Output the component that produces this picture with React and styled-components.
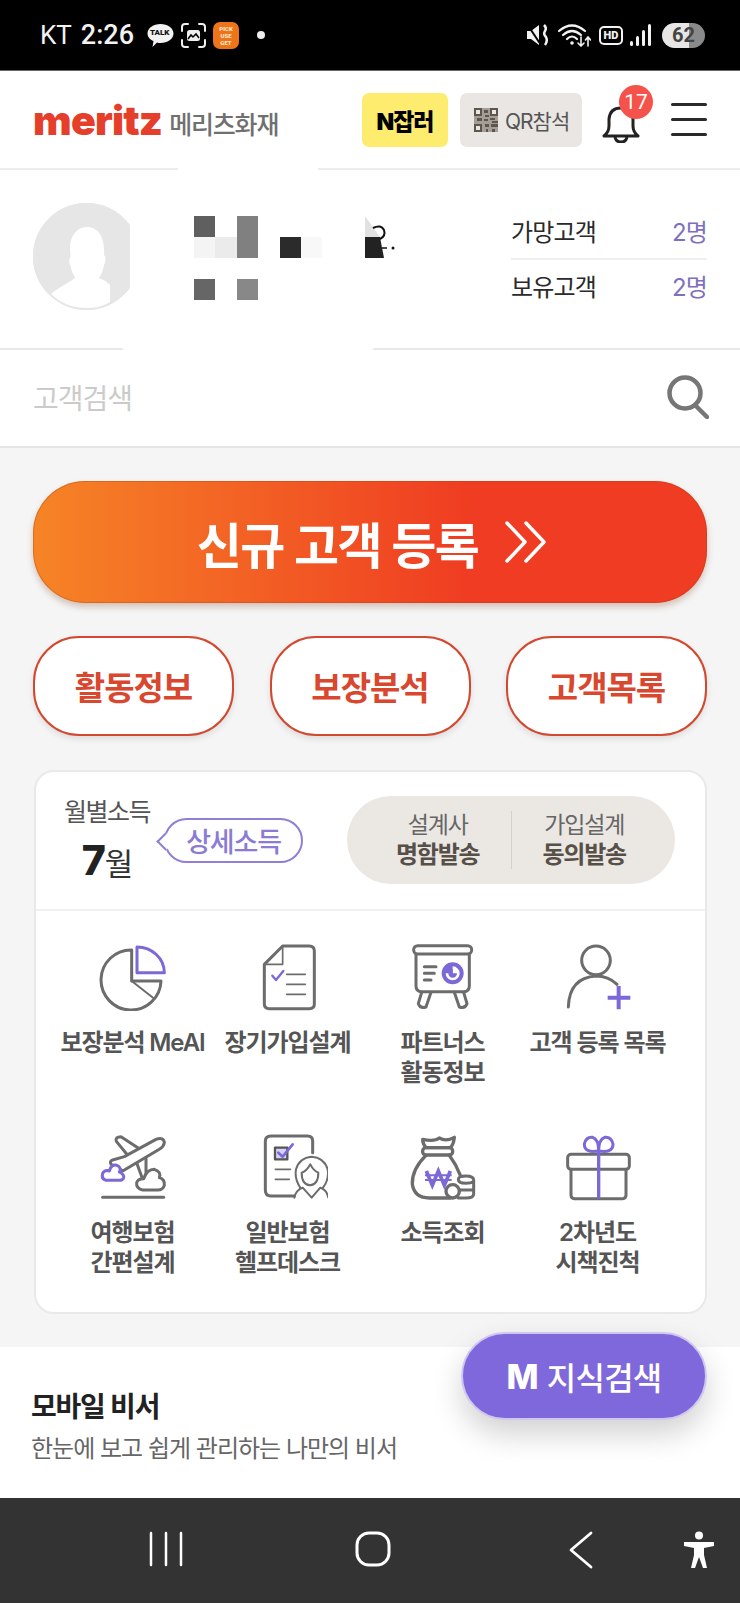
import React from "react";
import styled, { createGlobalStyle } from "styled-components";

const GRAY = "#6c6c6c";
const PURPLE = "#7d68d8";

const stats = [
  { label: "가망고객", count: "2명" },
  { label: "보유고객", count: "2명" },
];

const mosaic = [
  "#5f5f5f", null, "#808080", null, null, null, null, null, null,
  "#f4f4f4", "#ebebeb", "#808080", null, "#2b2b2b", "#f8f8f8", null, null, null,
  null, null, null, null, null, null, null, null, null,
  "#666666", null, "#888888", null, null, null, null, null, null,
];

const Icon = ({ box, children }) => (
  <svg width="80" height="70" viewBox={`${box} 240 210`} fill="none" stroke={GRAY} strokeWidth="9" strokeLinecap="round" strokeLinejoin="round">
    {children}
  </svg>
);

const menu = [
  {
    label: ["보장분석 MeAI"],
    icon: (
      <Icon box="156 60">
        <path d="M272 87A90 90 0 1 0 360 180H272Z" />
        <path d="M272 180L336 230" strokeWidth="6" />
        <path d="M288 78V155H370A82 77 0 0 0 288 78Z" stroke={PURPLE} />
      </Icon>
    ),
  },
  {
    label: ["장기가입설계"],
    icon: (
      <Icon box="621 60">
        <path d="M725 75H805Q820 75 820 90V250Q820 263 805 263H685Q670 263 670 250V130Z" />
        <path d="M670 130H725V75" strokeWidth="5" />
        <path d="M737 160H793M737 190H793M737 220H793" strokeWidth="5" />
        <path d="M694 164L705 177L727 150" stroke={PURPLE} strokeWidth="7" />
      </Icon>
    ),
  },
  {
    label: ["파트너스", "활동정보"],
    icon: (
      <Icon box="96 60">
        <rect x="128" y="74" width="174" height="25" rx="12" />
        <path d="M135 100V195Q135 212 152 212H278Q295 212 295 195V100" />
        <path d="M152 214L142 248Q148 264 165 258L180 214M250 214L265 258Q282 264 288 248L278 214" />
        <path d="M160 137H195M160 157H190M160 177H180" />
        <circle cx="245" cy="157" r="33" fill={PURPLE} stroke="none" />
        <path d="M224 157A21 21 0 1 0 245 136V157Z" fill="#fff" stroke="none" />
        <path d="M232 157A13 13 0 0 0 258 157H245V144A13 13 0 0 0 232 157Z" fill={PURPLE} stroke="none" />
      </Icon>
    ),
  },
  {
    label: ["고객 등록 목록"],
    icon: (
      <Icon box="561 60">
        <circle cx="675" cy="118" r="43" />
        <path d="M592 258Q595 170 675 165Q712 165 738 190" />
        <path d="M710 230H778M743 195V265" stroke={PURPLE} strokeWidth="12" strokeLinecap="butt" />
      </Icon>
    ),
  },
  {
    label: ["여행보험", "간편설계"],
    icon: (
      <Icon box="156 45">
        <path d="M262 120L226 76Q222 62 240 62L295 98" />
        <path d="M285 135L305 190M315 128V188" />
        <path d="M215 132L250 122L345 70Q368 62 370 80Q368 92 355 100L245 165Q225 150 210 145Q205 135 215 132Z" fill="#fff" />
        <path d="M305 222Q285 218 287 200Q290 188 308 188Q318 160 340 160Q362 168 355 185Q372 190 370 208Q366 222 350 222Z" fill="#fff" />
        <path d="M195 193Q180 188 185 172Q192 160 205 165Q212 140 232 150Q242 160 235 168Q250 175 248 185Q245 193 235 193Z" stroke={PURPLE} fill="#fff" />
        <path d="M185 244H368" />
      </Icon>
    ),
  },
  {
    label: ["일반보험", "헬프데스크"],
    icon: (
      <Icon box="621 45">
        <path d="M815 110V75Q815 60 800 60H690Q673 60 673 75V222Q673 240 690 240H760" />
        <rect x="702" y="95" width="37" height="35" stroke="#555" strokeWidth="7" fill="#d9d3f3" />
        <path d="M712 110L725 122L755 85" stroke={PURPLE} strokeWidth="8" />
        <path d="M703 160H748M703 190H745" strokeWidth="5" />
        <path d="M778 215Q760 190 765 160Q775 125 812 122Q850 125 860 160Q865 190 846 215" strokeWidth="6" />
        <path d="M782 170Q795 168 808 145Q818 165 832 170Q832 205 807 208Q782 205 782 170Z" strokeWidth="6" />
        <path d="M760 245Q765 222 785 215L812 245L838 215Q858 222 862 245" strokeWidth="6" />
      </Icon>
    ),
  },
  {
    label: ["소득조회"],
    icon: (
      <Icon box="96 45">
        <path d="M155 70Q190 78 205 66Q225 78 250 64Q248 85 238 95H165Q155 85 155 70Z" strokeWidth="10" />
        <rect x="155" y="95" width="90" height="22" rx="10" strokeWidth="10" />
        <path d="M165 118Q122 160 124 205Q130 246 175 246H238M235 118Q255 145 268 178" strokeWidth="10" />
        <path d="M166 165L184 208L202 165L220 208L238 165" stroke={PURPLE} strokeWidth="11" strokeLinecap="butt" strokeLinejoin="miter" />
        <path d="M162 178H242M162 192H242" stroke={PURPLE} strokeWidth="6" strokeLinecap="butt" />
        <circle cx="245" cy="226" r="20" strokeWidth="10" fill="#fff" />
        <path d="M262 190Q262 180 285 180Q308 180 308 192V234Q308 246 285 246H262M262 190Q262 202 285 202Q300 202 308 196M268 222H306" strokeWidth="9" />
      </Icon>
    ),
  },
  {
    label: ["2차년도", "시책진척"],
    icon: (
      <Icon box="561 45">
        <rect x="590" y="115" width="185" height="45" rx="10" />
        <path d="M600 160V238Q600 248 610 248H755Q765 248 765 238V160" />
        <path d="M683 105V248" stroke={PURPLE} strokeWidth="10" strokeLinecap="butt" />
        <path d="M683 105Q640 112 640 84Q645 62 665 64Q683 70 683 105Q726 112 726 84Q721 62 701 64Q683 70 683 105Z" stroke={PURPLE} />
      </Icon>
    ),
  },
];

const App = () => {
  return (
    <Page>
      <GlobalStyle />

      <StatusBar>
        <Carrier>KT</Carrier>
        <Clock>2:26</Clock>
        <TalkBubble>
          <svg width="27" height="25" viewBox="0 0 27 25">
            <path d="M13.5 1C20.5 1 26.500 5 26.500 10.500S20.500 20 13.500 20C12.500 20 11 20 10 19.500L5.500 24L6.500 18C3 16.500.5 14 .5 10.500C.5 5 6.500 1 13.500 1Z" fill="#f2f2f2" />
          </svg>
          <TalkText>TALK</TalkText>
        </TalkBubble>
        <svg width="25" height="25" viewBox="0 0 25 25" fill="none" stroke="#efefef" strokeWidth="2">
          <path d="M1 8V4Q1 1 4 1H7M18 1H21Q24 1 24 4V8M24 17V21Q24 24 21 24H18M7 24H4Q1 24 1 21V17" strokeLinecap="round" />
          <rect x="6" y="7" width="13" height="11" rx="2.500" fill="#efefef" stroke="none" />
          <path d="M7 16L10 12L12 14L15 11L18 15" stroke="#000" strokeWidth="1.500" />
        </svg>
        <OrangeBadge>
          <span>PICK</span>
          <span>USE</span>
          <span>GET</span>
        </OrangeBadge>
        <StatusDot />
        <StatusRight>
          <svg width="25" height="24" viewBox="0 0 25 24" fill="#f2f2f2">
            <path d="M1 8H5L13 2V22L5 16H1Z" />
            <path d="M1 1L15 22" stroke="#000" strokeWidth="2" />
            <path d="M18 2Q21 5 19 8Q17 11 20 14Q22 18 19 22" fill="none" stroke="#f2f2f2" strokeWidth="2.500" />
          </svg>
          <svg width="33" height="24" viewBox="0 0 33 24" fill="none" stroke="#f2f2f2" strokeWidth="2.200" strokeLinecap="round">
            <path d="M1 8Q14 -3 27 8M5 12Q14 4 23 12M9 16Q14 11 19 16" />
            <circle cx="14" cy="20" r="1.800" fill="#f2f2f2" stroke="none" />
            <path d="M23 14V23M20 20L23 23L26 20M30 23V14M27.500 17L30 14L32.500 17" strokeWidth="1.600" />
          </svg>
          <HdBadge>HD</HdBadge>
          <svg width="22" height="24" viewBox="0 0 22 24" fill="#f2f2f2">
            <rect x="0" y="18" width="3" height="5" rx="1.500" />
            <rect x="6" y="13" width="3" height="10" rx="1.500" />
            <rect x="12" y="7" width="3" height="16" rx="1.500" />
            <rect x="18" y="1" width="3" height="22" rx="1.500" />
          </svg>
          <Battery>62</Battery>
        </StatusRight>
      </StatusBar>

      <Header>
        <LogoMark>meritz</LogoMark>
        <LogoName>메리츠화재</LogoName>
        <HeaderActions>
          <NButton>N잡러</NButton>
          <QrButton>
            <svg width="24" height="24" viewBox="0 0 24 24" fill="#5e554d">
              <path d="M0 0H24V24H0Z" opacity=".5" />
              <path d="M0 0H8V8H0ZM16 0H24V8H16ZM0 16H8V24H0ZM10 2H14V5H10ZM11 7H15V9H11ZM10 11H14V13H10ZM3 10H8V13H3ZM16 10H21V12H16ZM18 13H24V15H18ZM11 16H15V19H11ZM17 16H24V19H17ZM12 21H14V24H12ZM18 21H21V24H18Z" />
              <path d="M2 2H6V6H2ZM18 2H22V6H18ZM2 18H6V22H2Z" fill="#e9e6e3" />
            </svg>
            QR참석
          </QrButton>
          <BellWrap>
            <svg width="38" height="38" viewBox="0 0 38 38" fill="none" stroke="#222" strokeWidth="3" strokeLinejoin="round">
              <path d="M2 31Q7 27 7 21V14Q8 3 19 3Q30 3 31 14V21Q31 27 36 31Z" />
              <path d="M13 32Q14 37 19 37Q24 37 25 32" />
            </svg>
            <BellBadge>17</BellBadge>
          </BellWrap>
          <Hamburger>
            <span />
            <span />
            <span />
          </Hamburger>
        </HeaderActions>
      </Header>

      <Profile>
        <HeaderPatch />
        <LinePatch />
        <AvatarClip>
          <svg width="107" height="107" viewBox="0 0 107 107">
            <circle cx="53.500" cy="53.500" r="53.500" fill="#e6e6e6" />
            <path d="M54 24C44 24 37 33 37 45C37 50 38 52 37 55C35 58 37 62 38 64C38 69 42 73 42 75C34 81 24 85 17 92C28 104 42 106 54 106C60 106 70 104 77 99V82C73 78 71 77 66 75C68 72 70 68 71 62C73 58 73 54 71 52C72 35 66 24 54 24Z" fill="#fff" />
            <circle cx="53.500" cy="53.500" r="52.500" fill="none" stroke="#e6e6e6" strokeWidth="2" />
          </svg>
        </AvatarClip>
        <Mosaic>
          {mosaic.map((color, i) => (
            <Pixel key={i} $color={color} />
          ))}
          <MosaicTail width="42" height="42" viewBox="0 0 42 42">
            <path d="M0 0V21H15Z" fill="#e2e2e2" />
            <path d="M0 21H15L19 42H0Z" fill="#222" />
            <path d="M8 12Q16 8 19 14Q21 20 15 23" fill="none" stroke="#111" strokeWidth="2" />
            <path d="M17 32H22" stroke="#111" strokeWidth="1.500" />
            <circle cx="28" cy="32" r="1.500" fill="#111" />
          </MosaicTail>
        </Mosaic>
        <StatList>
          {stats.map((stat) => (
            <StatRow key={stat.label}>
              <span>{stat.label}</span>
              <StatCount>{stat.count}</StatCount>
            </StatRow>
          ))}
        </StatList>
      </Profile>

      <SearchBar>
        <SearchHint>고객검색</SearchHint>
        <svg width="42" height="44" viewBox="0 0 42 44" fill="none" stroke="#767676" strokeWidth="4.500" strokeLinecap="round">
          <circle cx="18" cy="18" r="15.500" />
          <path d="M29 31L40 42" />
        </svg>
      </SearchBar>

      <Main>
        <PrimaryButton>
          신규 고객 등록
          <svg width="42" height="42" viewBox="0 0 42 42" fill="none" stroke="#fff" strokeWidth="3.500" strokeLinecap="round" strokeLinejoin="round">
            <path d="M2 2L20 21L2 40M21 2L39 21L21 40" />
          </svg>
        </PrimaryButton>

        <QuickRow>
          <QuickButton>활동정보</QuickButton>
          <QuickButton>보장분석</QuickButton>
          <QuickButton>고객목록</QuickButton>
        </QuickRow>

        <Card>
          <CardHead>
            <MonthBlock>
              <MonthTitle>월별소득</MonthTitle>
              <MonthValue><b>7</b>월</MonthValue>
            </MonthBlock>
            <DetailBubble>상세소득</DetailBubble>
            <SendPill>
              <SendItem>
                <span>설계사</span>
                <b>명함발송</b>
              </SendItem>
              <SendItem>
                <span>가입설계</span>
                <b>동의발송</b>
              </SendItem>
            </SendPill>
          </CardHead>

          <MenuGrid>
            {menu.map((item) => (
              <MenuItem key={item.label[0]}>
                {item.icon}
                <MenuLabel>
                  {item.label.map((line) => (
                    <div key={line}>{line}</div>
                  ))}
                </MenuLabel>
              </MenuItem>
            ))}
          </MenuGrid>
        </Card>
      </Main>

      <Secretary>
        <SecretaryTitle>모바일 비서</SecretaryTitle>
        <SecretaryText>한눈에 보고 쉽게 관리하는 나만의 비서</SecretaryText>
      </Secretary>

      <NavBar>
        <svg width="34" height="36" viewBox="0 0 34 36" stroke="#fff" strokeWidth="2.500" strokeLinecap="round">
          <path d="M2 2V34M17 2V34M32 2V34" />
        </svg>
        <svg width="36" height="36" viewBox="0 0 36 36" fill="none" stroke="#fff" strokeWidth="3">
          <rect x="2" y="2" width="32" height="32" rx="12" />
        </svg>
        <svg width="24" height="38" viewBox="0 0 24 38" fill="none" stroke="#fff" strokeWidth="2.800" strokeLinecap="round" strokeLinejoin="round">
          <path d="M22 2L2 19L22 36" />
        </svg>
        <svg width="32" height="38" viewBox="0 0 32 38" fill="#fff">
          <circle cx="16" cy="4.500" r="4" />
          <path d="M1 11H31V15L21 17V24L24 37H20L16 26L12 37H8L11 24V17L1 15Z" />
        </svg>
      </NavBar>

      <KnowledgeFab><b>M</b> 지식검색</KnowledgeFab>
    </Page>
  );
};

export default App;

const GlobalStyle = createGlobalStyle`
  html, body {
    margin: 0;
    padding: 0;
    background: #fff;
  }

  * {
    box-sizing: border-box;
  }

  body {
    font-family: "Inter", "Noto Sans CJK KR", sans-serif;
  }
`;

const Page = styled.div`
  position: relative;
  display: flex;
  flex-direction: column;
  width: 740px;
  height: 1603px;
  overflow: hidden;
`;

const StatusBar = styled.div`
  display: flex;
  align-items: center;
  flex: 0 0 71px;
  padding: 4px 35px 4px 40px;
  background: #000;
  border-bottom: 1px solid #666;
  color: #f2f2f2;
  font-family: "Roboto", sans-serif;
`;

const Carrier = styled.span`
  font-size: 26px;
  margin-right: 9px;
`;

const Clock = styled.span`
  font-size: 27px;
  font-weight: 500;
  margin-right: 13px;
`;

const TalkBubble = styled.div`
  position: relative;
  width: 27px;
  height: 25px;
  margin-right: 7px;
`;

const TalkText = styled.span`
  position: absolute;
  left: 3px;
  top: 5px;
  color: #111;
  font-size: 8px;
  font-weight: 900;
  line-height: 10px;
`;

const OrangeBadge = styled.div`
  display: flex;
  flex-direction: column;
  justify-content: center;
  align-items: center;
  width: 26px;
  height: 27px;
  margin-left: 7px;
  border-radius: 7px;
  background: #ee7419;
  color: #ffe3c8;
  font-size: 6px;
  font-weight: 900;
  line-height: 7px;
`;

const StatusDot = styled.i`
  width: 8px;
  height: 8px;
  margin-left: 18px;
  border-radius: 50%;
  background: #eee;
`;

const StatusRight = styled.div`
  display: flex;
  align-items: center;
  gap: 7px;
  margin-left: auto;
`;

const HdBadge = styled.span`
  display: flex;
  align-items: center;
  justify-content: center;
  width: 24px;
  height: 19px;
  border: 2px solid #f2f2f2;
  border-radius: 5px;
  font-size: 11px;
  font-weight: 900;
  margin-left: 1px;
`;

const Battery = styled.span`
  display: flex;
  align-items: center;
  justify-content: center;
  width: 43px;
  height: 25px;
  margin-left: 3px;
  border-radius: 13px;
  background: linear-gradient(90deg, #e6e6e6 0 62%, #8a8a8a 62%);
  color: #444;
  font-size: 20px;
  font-weight: 700;
`;

const Header = styled.header`
  display: flex;
  align-items: center;
  flex: 0 0 99px;
  padding: 0 33px;
  background: #fff;
  border-bottom: 2px solid #ececec;
`;

const LogoMark = styled.span`
  color: #e53e2b;
  font-size: 41px;
  font-weight: 900;
  letter-spacing: -0.8px;
  line-height: 40px;
`;

const LogoName = styled.span`
  margin: 7px 0 0 7px;
  color: #707070;
  font-size: 25px;
  font-weight: 500;
  letter-spacing: -1.2px;
`;

const HeaderActions = styled.div`
  display: flex;
  align-items: center;
  margin-left: auto;
`;

const NButton = styled.div`
  display: flex;
  align-items: center;
  justify-content: center;
  width: 86px;
  height: 54px;
  margin-right: 12px;
  border-radius: 7px;
  background: #fdec6e;
  color: #000;
  font-size: 23px;
  font-weight: 900;
  letter-spacing: -1px;
`;

const QrButton = styled.div`
  display: flex;
  align-items: center;
  gap: 7px;
  width: 122px;
  height: 54px;
  padding-left: 14px;
  border-radius: 7px;
  background: #e9e6e3;
  color: #555;
  font-size: 21px;
  letter-spacing: -1px;
`;

const BellWrap = styled.div`
  position: relative;
  display: flex;
  width: 38px;
  height: 38px;
  margin: 8px 0 0 20px;
`;

const BellBadge = styled.span`
  position: absolute;
  top: -20px;
  right: -13px;
  display: flex;
  align-items: center;
  justify-content: center;
  width: 34px;
  height: 34px;
  border-radius: 50%;
  background: #f4524a;
  color: #fff;
  font-family: "Roboto", sans-serif;
  font-size: 21px;
`;

const Hamburger = styled.div`
  display: flex;
  flex-direction: column;
  gap: 12px;
  width: 36px;
  margin-left: 31px;

  span {
    height: 3px;
    border-radius: 2px;
    background: #2a2a2a;
  }
`;

const Profile = styled.section`
  position: relative;
  display: flex;
  flex: 0 0 180px;
  padding: 33px 33px 0;
  border-bottom: 2px solid #e8e8e8;
`;

const HeaderPatch = styled.div`
  position: absolute;
  top: -4px;
  left: 178px;
  width: 140px;
  height: 6px;
  background: #fff;
`;

const LinePatch = styled.div`
  position: absolute;
  bottom: -2px;
  left: 123px;
  width: 250px;
  height: 2px;
  background: #fff;
`;

const AvatarClip = styled.div`
  width: 97px;
  height: 107px;
  overflow: hidden;

  svg {
    display: block;
  }
`;

const Mosaic = styled.div`
  position: relative;
  display: grid;
  grid-template-columns: repeat(9, 21.4px);
  grid-auto-rows: 21px;
  align-self: flex-start;
  margin: 13px 0 0 64px;
`;

const Pixel = styled.div`
  background: ${(props) => props.$color || "transparent"};
`;

const MosaicTail = styled.svg`
  position: absolute;
  left: 171px;
  top: 0;
`;

const StatList = styled.div`
  width: 196px;
  margin: -1px 0 0 auto;
`;

const StatRow = styled.div`
  display: flex;
  align-items: center;
  justify-content: space-between;
  height: 56px;
  color: #2a2a2a;
  font-size: 24px;
  letter-spacing: -0.8px;

  & + & {
    border-top: 2px solid #efefef;
    padding-bottom: 3px;
  }
`;

const StatCount = styled.span`
  color: #7e6fc0;
`;

const SearchBar = styled.div`
  display: flex;
  align-items: center;
  justify-content: space-between;
  flex: 0 0 98px;
  padding: 0 31px 2px 33px;
  background: #fff;
  border-bottom: 2px solid #e5e5e5;
`;

const SearchHint = styled.span`
  color: #cbcbcb;
  font-size: 28px;
  letter-spacing: -1px;
`;

const Main = styled.main`
  display: flex;
  flex-direction: column;
  flex: 0 0 899px;
  padding: 33px 33px 0;
  background: #f5f5f5;
`;

const PrimaryButton = styled.div`
  display: flex;
  align-items: center;
  justify-content: center;
  gap: 27px;
  height: 122px;
  padding-left: 4px;
  border-radius: 52px;
  background: linear-gradient(90deg, #f68426 0%, #ef3c22 65%);
  box-shadow: 0 4px 6px rgba(120, 60, 30, 0.28), inset 0 0 0 1px rgba(170, 70, 20, 0.35);
  color: #fff;
  font-size: 49px;
  font-weight: 700;
  letter-spacing: -1.5px;
`;

const QuickRow = styled.div`
  display: grid;
  grid-template-columns: 201px 201px 201px;
  justify-content: space-between;
  margin-top: 33px;
`;

const QuickButton = styled.div`
  display: flex;
  align-items: center;
  justify-content: center;
  height: 100px;
  border: 2px solid #d2492f;
  border-radius: 46px;
  background: #fff;
  box-shadow: 0 3px 6px rgba(0, 0, 0, 0.1);
  color: #d9472f;
  font-size: 33px;
  font-weight: 700;
  letter-spacing: -1px;
`;

const Card = styled.div`
  margin: 34px 0 0 1px;
  height: 544px;
  border: 2px solid #e9e9e9;
  border-radius: 20px;
  background: #fff;
`;

const CardHead = styled.div`
  display: flex;
  align-items: center;
  height: 139px;
  padding: 0 30px 2px 28px;
  border-bottom: 2px solid #f0f0f0;
`;

const MonthBlock = styled.div`
  display: flex;
  flex-direction: column;
  align-items: center;
  width: 86px;
  margin-top: 2px;
`;

const MonthTitle = styled.div`
  color: #555;
  font-size: 25px;
  letter-spacing: -1.5px;
  line-height: 30px;
`;

const MonthValue = styled.div`
  margin-top: 12px;
  color: #333;
  font-size: 31px;
  letter-spacing: -1px;
  line-height: 42px;

  b {
    color: #222;
    font-size: 41px;
    font-weight: 800;
  }
`;

const DetailBubble = styled.div`
  position: relative;
  display: flex;
  align-items: center;
  justify-content: center;
  width: 139px;
  height: 45px;
  margin: 2px 0 0 14px;
  border: 2px solid #8f7fd6;
  border-radius: 23px;
  color: #8b7bd4;
  font-size: 27px;
  font-weight: 500;
  letter-spacing: -1.2px;

  &::before {
    content: "";
    position: absolute;
    top: 15px;
    left: -7px;
    width: 11px;
    height: 11px;
    border-left: 2px solid #8f7fd6;
    border-bottom: 2px solid #8f7fd6;
    background: #fff;
    transform: rotate(45deg);
  }
`;

const SendPill = styled.div`
  display: flex;
  align-items: center;
  width: 328px;
  height: 88px;
  margin-left: auto;
  padding: 0 18px;
  border-radius: 44px;
  background: #ebe7e3;
`;

const SendItem = styled.div`
  display: flex;
  flex-direction: column;
  align-items: center;
  justify-content: center;
  flex: 1;
  height: 58px;
  color: #666;
  font-size: 23px;
  letter-spacing: -1.2px;
  line-height: 29px;

  b {
    color: #575049;
    font-size: 24px;
    font-weight: 700;
  }

  & + & {
    border-left: 1px solid #d5d0cb;
  }
`;

const MenuGrid = styled.div`
  display: grid;
  grid-template-columns: repeat(4, 155px);
  grid-auto-rows: 147px;
  row-gap: 43px;
  padding: 30px 0 0 19px;
`;

const MenuItem = styled.div`
  display: flex;
  flex-direction: column;
  align-items: center;

  svg {
    display: block;
    flex: none;
  }
`;

const MenuLabel = styled.div`
  margin-top: 17px;
  color: #555;
  font-size: 24px;
  font-weight: 600;
  letter-spacing: -1.100px;
  line-height: 30px;
  text-align: center;
  white-space: nowrap;
`;

const Secretary = styled.section`
  flex: 0 0 151px;
  padding: 42px 31px 0;
  background: #fff;
`;

const SecretaryTitle = styled.div`
  color: #222;
  font-size: 28px;
  font-weight: 700;
  letter-spacing: -1.200px;
  line-height: 36px;
`;

const SecretaryText = styled.div`
  margin-top: 6px;
  color: #666;
  font-size: 24px;
  letter-spacing: -1px;
  line-height: 36px;
`;

const NavBar = styled.nav`
  display: grid;
  grid-template-columns: 206px 214px 114px auto;
  align-items: start;
  flex: 0 0 105px;
  padding: 33px 0 0 149px;
  background: #333;
`;

const KnowledgeFab = styled.div`
  position: absolute;
  top: 1332px;
  left: 461px;
  display: flex;
  align-items: center;
  justify-content: center;
  gap: 9px;
  width: 246px;
  height: 88px;
  border: 2px solid #cfc7f0;
  border-radius: 44px;
  background: #7f68db;
  box-shadow: 0 14px 30px rgba(0, 0, 0, 0.18);
  color: #fff;
  font-size: 32px;
  font-weight: 500;
  letter-spacing: -0.8px;

  b {
    font-size: 34px;
    font-weight: 800;
  }
`;
